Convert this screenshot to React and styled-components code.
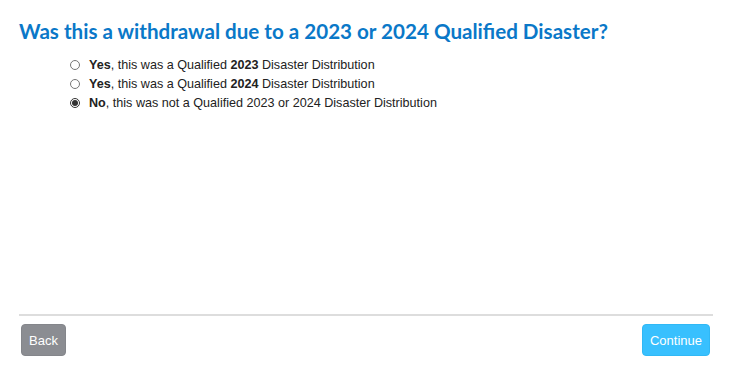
import React, { useState } from "react";
import styled, { createGlobalStyle } from "styled-components";

const GlobalStyle = createGlobalStyle`
  html, body {
    margin: 0;
    padding: 0;
    background: #ffffff;
  }
  body {
    font-family: "Liberation Sans", Arial, sans-serif;
  }
`;

const options = [
  { id: "y2023", lead: "Yes", pre: ", this was a Qualified ", strong: "2023", post: " Disaster Distribution" },
  { id: "y2024", lead: "Yes", pre: ", this was a Qualified ", strong: "2024", post: " Disaster Distribution" },
  { id: "no", lead: "No", pre: ", this was not a Qualified 2023 or 2024 Disaster Distribution", strong: "", post: "" },
];

const App = () => {
  const [picked, setPicked] = useState("no");

  return (
    <>
      <GlobalStyle />
      <Page>
        <Title>Was this a withdrawal due to a 2023 or 2024 Qualified Disaster?</Title>
        <OptionList>
          {options.map((o) => (
            <Option key={o.id}>
              <Radio
                type="radio"
                name="disaster"
                checked={picked === o.id}
                onChange={() => setPicked(o.id)}
              />
              <span>
                <b>{o.lead}</b>
                {o.pre}
                {o.strong && <b>{o.strong}</b>}
                {o.post}
              </span>
            </Option>
          ))}
        </OptionList>
        <Spacer />
        <Divider />
        <Footer>
          <Button $variant="back">Back</Button>
          <Button $variant="next">Continue</Button>
        </Footer>
      </Page>
    </>
  );
};

export default App;

const Page = styled.div`
  width: 694px;
  height: 372px;
  margin: 0 0 0 19px;
  display: flex;
  flex-direction: column;
  box-sizing: border-box;
  padding-top: 18px;
`;

const Title = styled.h1`
  margin: 0;
  font-family: "Lato", "Liberation Sans", sans-serif;
  font-weight: 700;
  font-size: 20.6px;
  line-height: 26px;
  color: #0a78c8;
`;

const OptionList = styled.div`
  display: flex;
  flex-direction: column;
  margin-top: 11px;
  padding-left: 51px;
`;

const Option = styled.label`
  display: flex;
  align-items: center;
  gap: 9px;
  height: 19px;
  font-size: 12.6px;
  color: #222;
  cursor: pointer;

  b {
    font-weight: 700;
  }
`;

const Radio = styled.input`
  margin: 0;
  width: 10px;
  height: 10px;
  accent-color: #333;
`;

const Spacer = styled.div`
  flex: 1;
`;

const Divider = styled.div`
  height: 2px;
  background: #dddddd;
  margin-bottom: 8px;
`;

const Footer = styled.div`
  display: flex;
  justify-content: space-between;
  align-items: center;
  padding: 0 3px 16px 2px;
`;

const Button = styled.button`
  height: 32px;
  padding: 0 7px;
  border-radius: 4px;
  font-family: "Liberation Sans", Arial, sans-serif;
  font-size: 13px;
  color: #ffffff;
  cursor: pointer;
  border: 1px solid ${(p) => (p.$variant === "back" ? "#84868b" : "#30b8f5")};
  background: ${(p) => (p.$variant === "back" ? "#8b8d92" : "#38c0fe")};
`;
